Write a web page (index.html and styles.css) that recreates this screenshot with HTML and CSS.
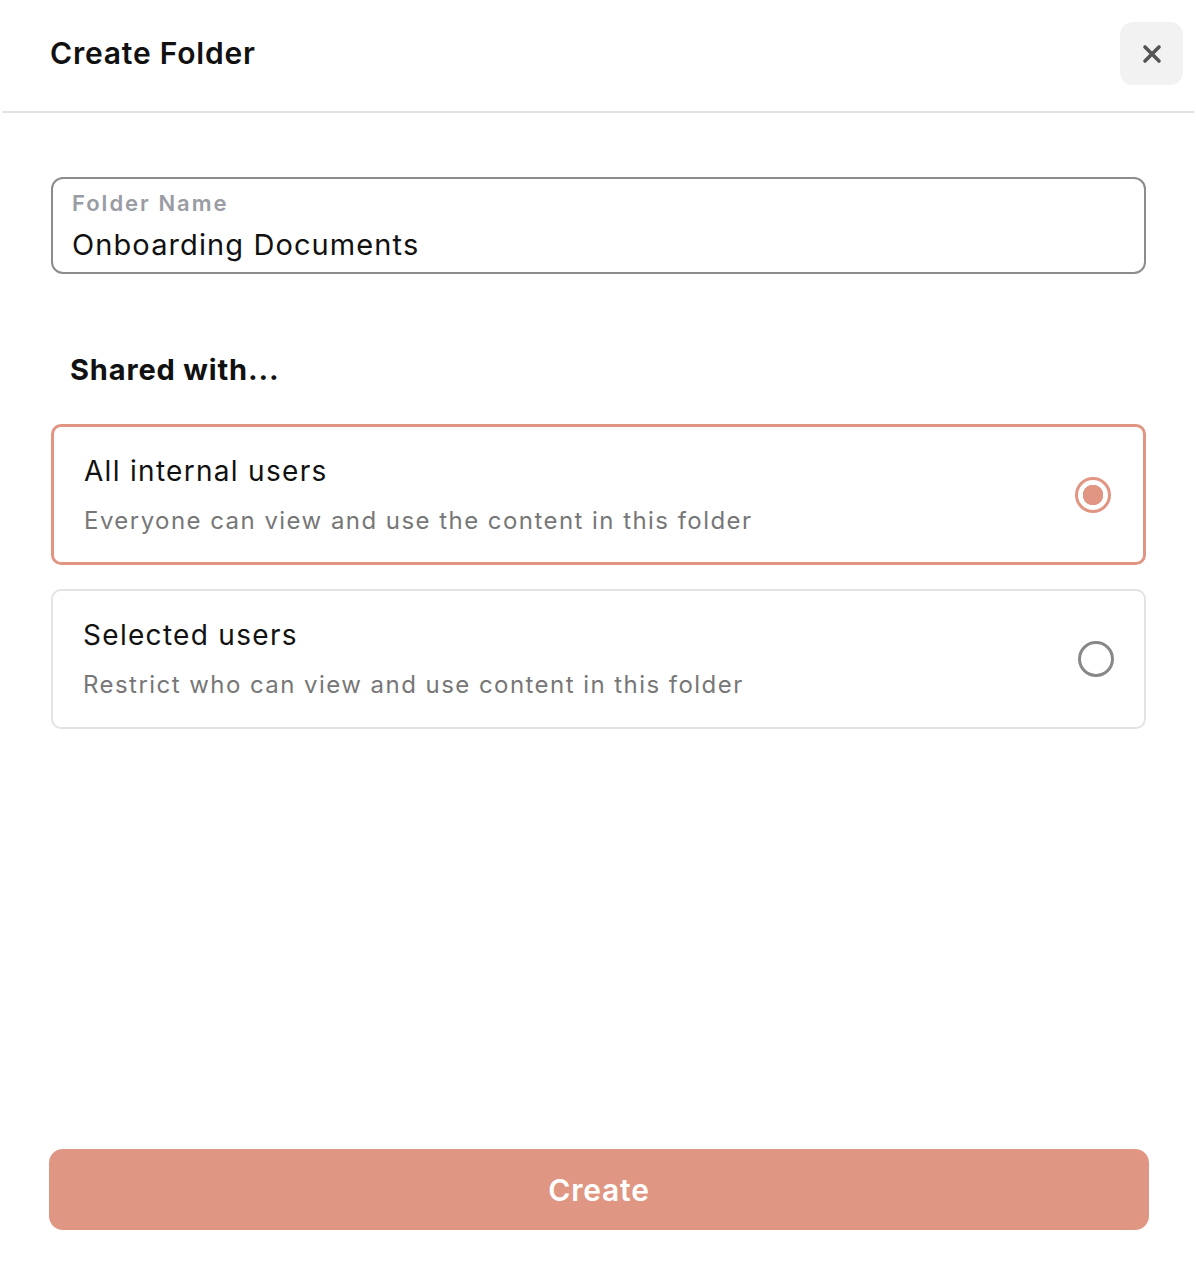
FILE: index.html
```html
<!DOCTYPE html>
<html lang="en">
<head>
<meta charset="utf-8">
<title>Create Folder</title>
<link rel="stylesheet" href="styles.css">
</head>
<body>
<div class="dialog">
  <header class="dialog-header">
    <h1 class="dialog-title">Create Folder</h1>
    <button class="close-btn" aria-label="Close">
      <svg width="22" height="22" viewBox="0 0 22 22"><path d="M4 4 L18 18 M18 4 L4 18" stroke="#555" stroke-width="3.6" stroke-linecap="round"/></svg>
    </button>
  </header>
  <main class="dialog-body">
    <div class="field">
      <div class="field-label">Folder Name</div>
      <div class="field-value">Onboarding Documents</div>
    </div>
    <h2 class="section-title">Shared with...</h2>
    <div class="options">
      <div class="option option-selected">
        <div class="option-text">
          <div class="option-title">All internal users</div>
          <div class="option-desc">Everyone can view and use the content in this folder</div>
        </div>
        <span class="radio radio-on"></span>
      </div>
      <div class="option">
        <div class="option-text">
          <div class="option-title">Selected users</div>
          <div class="option-desc">Restrict who can view and use content in this folder</div>
        </div>
        <span class="radio"></span>
      </div>
    </div>
  </main>
  <footer class="dialog-footer">
    <button class="create-btn">Create</button>
  </footer>
</div>
</body>
</html>
```

FILE: styles.css
```css
* { box-sizing: border-box; }
html, body { margin: 0; padding: 0; background: #fff; }
body { font-family: Inter, "Noto Sans", "Liberation Sans", sans-serif; color: #111; }

.dialog {
  height: 1280px;
  display: flex;
  flex-direction: column;
}

.dialog-header {
  height: 113px;
  margin: 0 2px;
  border-bottom: 2px solid #e3e3e3;
  display: flex;
  align-items: flex-start;
  justify-content: space-between;
  padding: 0 11px 0 48px;
}

.dialog-title {
  margin: 0;
  padding-top: 35px;
  font-size: 30px;
  line-height: 36px;
  font-weight: 600;
  color: #111;
  letter-spacing: 0.8px;
}

.close-btn {
  margin-top: 22px;
  width: 63px;
  height: 63px;
  border: none;
  border-radius: 13px;
  background: #f2f2f2;
  display: flex;
  align-items: center;
  justify-content: center;
  padding: 0;
}

.dialog-body {
  padding: 64px 50px 0 51px;
}

.field {
  width: 1095px;
  height: 97px;
  border: 2px solid #8c8c8c;
  border-radius: 12px;
  padding: 11px 19px 0;
}

.field-label {
  font-size: 22px;
  line-height: 26px;
  font-weight: 600;
  color: #9a9ca3;
  letter-spacing: 2px;
}

.field-value {
  font-size: 29px;
  line-height: 38px;
  color: #111;
  margin-top: 10px;
  letter-spacing: 1.1px;
}

.section-title {
  margin: 78px 0 0 19px;
  font-size: 29px;
  line-height: 36px;
  font-weight: 700;
  color: #111;
  letter-spacing: 0.85px;
}

.options {
  margin-top: 36px;
  display: flex;
  flex-direction: column;
  gap: 24px;
  width: 1095px;
}

.option {
  display: flex;
  align-items: center;
  justify-content: space-between;
  border: 2px solid #e3e3e3;
  border-radius: 10px;
  height: 140px;
  padding: 0 30px 0 30px;
}

.option-selected {
  border: 3px solid #e09683;
  height: 141px;
  padding: 0 32px 0 30px;
}

.option-title {
  font-size: 28px;
  line-height: 34px;
  color: #111;
  letter-spacing: 1.3px;
}

.option-desc {
  margin-top: 18px;
  font-size: 24px;
  line-height: 30px;
  color: #777;
  letter-spacing: 1.45px;
}

.radio {
  width: 36px;
  height: 36px;
  border-radius: 50%;
  border: 3.5px solid #888;
  flex: none;
}

.radio-on {
  border-color: #e09683;
  background: radial-gradient(circle, #e09683 0 10px, #fff 10.5px);
}

.dialog-footer {
  margin-top: auto;
  padding: 0 47px 50px 49px;
}

.create-btn {
  width: 100%;
  height: 81px;
  border: none;
  border-radius: 14px;
  background: #df9683;
  color: #fff;
  font-family: Inter, "Noto Sans", "Liberation Sans", sans-serif;
  font-size: 30px;
  font-weight: 600;
  letter-spacing: 0.8px;
  padding: 0;
}
```
